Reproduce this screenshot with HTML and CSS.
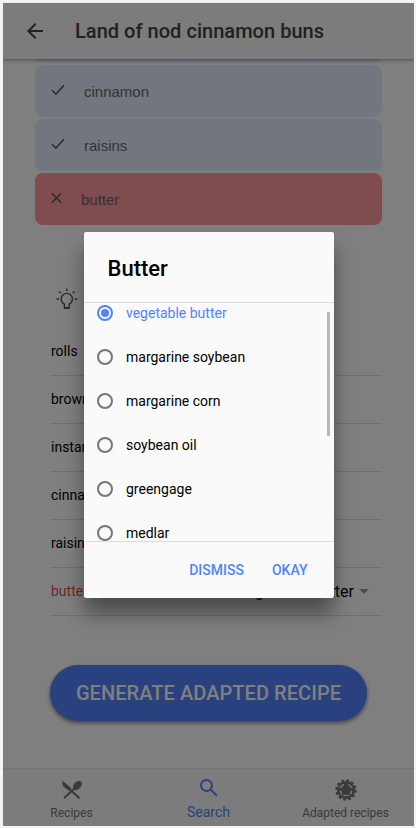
FILE: index.html
```html
<!DOCTYPE html>
<html lang="en">
<head>
<meta charset="utf-8">
<title>Land of nod cinnamon buns</title>
<link rel="stylesheet" href="styles.css">
</head>
<body>
<div class="screen">
  <header class="toolbar">
    <svg class="back" viewBox="0 0 16 16"><path d="M16 7H3.8l5.6-5.6L8 0 0 8l8 8 1.4-1.4L3.8 9H16z"/></svg>
    <h1>Land of nod cinnamon buns</h1>
  </header>
  <main class="content">
    <div class="ingredients">
      <div class="ingredient"></div>
      <div class="ingredient"><svg class="check" viewBox="0 0 14 12"><path d="M1 6.2l3.9 3.9L13 1.3"/></svg><span>cinnamon</span></div>
      <div class="ingredient"><svg class="check" viewBox="0 0 14 12"><path d="M1 6.2l3.9 3.9L13 1.3"/></svg><span>raisins</span></div>
      <div class="ingredient missing"><svg class="cross" viewBox="0 0 11 12"><path d="M.8 1.3l9.4 9.4M10.2 1.3L.8 10.7"/></svg><span>butter</span></div>
    </div>
    <div class="tip">
      <svg viewBox="0 0 22 22"><path d="M8.4 20.3v-4.1C6.3 15 5.2 13.100 5.200 11a5.600 5.600 0 0 1 11.200 0c0 2.100-1.100 4-3.200 5.200v4.100zM10.800 .5v2.600M.4 11h2.700M18.600 11h2.700M3.200 3.400l1.700 1.700M18.400 3.400l-1.700 1.700"/><path d="M8.400 19.700h4.800"/></svg>
    </div>
    <div class="replacements">
      <div class="row">rolls</div>
      <div class="row">brown sugar</div>
      <div class="row">instant</div>
      <div class="row">cinnamon</div>
      <div class="row">raisins</div>
      <div class="row changed"><span>butter</span><span class="select">vegetable butter<i class="caret"></i></span></div>
    </div>
    <button class="generate">GENERATE ADAPTED RECIPE</button>
  </main>
  <nav class="tabs">
    <div class="tab">
      <svg class="cutlery" viewBox="0 0 20 18"><path d="M1 .1L9.200 7.300 6.800 9.800 1.900 6.100Q-.8 3 1 .1z"/><path d="M12.400 9c-2-1.700-1.600-4.900.5-7 2-2 5-2.500 6.300-1.200 1.300 1.300.8 4.300-1.300 6.200-1.900 1.800-4.100 2.500-5.500 2z"/><path class="stroke" d="M2 17.300L14 6M7.500 8.300l10.100 9"/></svg>
      <span>Recipes</span>
    </div>
    <div class="tab active">
      <svg class="search" viewBox="0 0 18 18"><circle cx="6.500" cy="6.500" r="5.500"/><path d="M10.500 10.500l6.400 6.400"/></svg>
      <span>Search</span>
    </div>
    <div class="tab">
      <svg class="gear" viewBox="0 0 22 22">
        <circle class="teeth" cx="11" cy="11" r="9.600"/>
        <circle cx="11" cy="11" r="9"/>
        <path class="gaps" d="M5.300 8.300l3-2.500M13.700 5.800l3 2.500M5.400 12.200l1.200 2.600M16.600 12.200l-1.200 2.600M8.800 16.500h4.400"/>
      </svg>
      <span>Adapted recipes</span>
    </div>
  </nav>
  <div class="backdrop">
    <section class="dialog">
      <h2>Butter</h2>
      <div class="options">
        <label class="option selected"><i class="radio"></i>vegetable butter</label>
        <label class="option"><i class="radio"></i>margarine soybean</label>
        <label class="option"><i class="radio"></i>margarine corn</label>
        <label class="option"><i class="radio"></i>soybean oil</label>
        <label class="option"><i class="radio"></i>greengage</label>
        <label class="option"><i class="radio"></i>medlar</label>
        <i class="thumb"></i>
      </div>
      <footer><button>DISMISS</button><button>OKAY</button></footer>
    </section>
  </div>
</div>
</body>
</html>
```
FILE: styles.css
```css
* { box-sizing: border-box; }
body { margin: 0; padding: 3px 2px 2px 3px; height: 828px; overflow: hidden; background: #efefef; font-family: Roboto, sans-serif; box-shadow: inset 0 0 0 2px #f4f4f4; }
svg { display: block; flex: none; overflow: visible; }
button { border: 0; background: none; font-family: inherit; font-weight: 500; padding: 0; white-space: nowrap; }
.screen { position: relative; width: 411px; height: 823px; display: flex; flex-direction: column; background: #fff; overflow: hidden; }
.toolbar { height: 56px; flex: none; display: flex; align-items: center; padding-left: 24px; background: #f8f8f8; box-shadow: 0 1px 4px rgba(0,0,0,.42); z-index: 1; }
.back { width: 16px; height: 16px; fill: #424242; }
.toolbar h1 { margin: 0 0 0 32px; font-size: 20px; line-height: 24px; font-weight: 500; letter-spacing: .03px; color: #424242; white-space: nowrap; }
.content { flex: 1; min-height: 0; overflow: hidden; }
.ingredients { display: grid; gap: 2px; margin: -48px 32px 0; }
.ingredient { height: 52px; border-radius: 8px; background: #e5eeff; display: flex; align-items: center; padding: 1px 0 0 16px; font: 15px "Liberation Sans", sans-serif; color: #666; }
.ingredient svg { fill: none; stroke: #555; stroke-width: 1.500px; margin-bottom: 3px; }
.check { width: 14px; height: 12px; margin-right: 19px; }
.cross { width: 11px; height: 12px; margin-right: 19px; }
.missing { background: #ff98a1; }
.tip { height: 103px; padding: 63px 0 0 53px; }
.tip svg { width: 22px; height: 22px; fill: none; stroke: #555; stroke-width: 1.400px; }
.replacements { margin: 0 32px 0 48px; }
.row { height: 48px; padding-bottom: 1px; border-bottom: 1px solid #dedede; display: flex; align-items: center; justify-content: space-between; font-size: 14px; color: #000; }
.changed { color: #e94b48; }
.select { display: flex; align-items: center; font-size: 16px; color: #000; margin: 1px 13px 0 0; }
.caret { border: 5px solid transparent; border-top-color: #999; border-bottom: 0; margin-left: 5px; }
.generate { display: block; width: 317px; height: 56px; margin: 49px 0 0 47px; border-radius: 28px; background: #5283fd; color: #fff; font-size: 20px; letter-spacing: .06px; box-shadow: 0 2px 4px rgba(0,0,0,.5); }
.tabs { height: 58px; flex: none; display: grid; grid-template-columns: repeat(3, 1fr); border-top: 1px solid #e4e4e4; background: #f8f8f8; }
.tab { display: flex; flex-direction: column; align-items: center; font-size: 12px; line-height: 14px; color: #747474; }
.tab svg { fill: #747474; }
.tab span { margin-top: auto; margin-bottom: 6px; }
.tab.active { color: #5283fd; font-size: 14px; }
.tab.active span { margin-bottom: 7px; }
.tab .cutlery { width: 20px; height: 18px; margin-top: 12px; }
.cutlery .stroke { stroke: #747474; stroke-width: 2px; fill: none; }
.tab .search { width: 18px; height: 18px; margin-top: 10px; fill: none; stroke: #5283fd; stroke-width: 2px; }
.gear { width: 22px; height: 22px; margin-top: 10px; }
.gear .teeth { fill: none; stroke: #747474; stroke-width: 2.200px; stroke-dasharray: 2.826 2.200; }
.gear .gaps { fill: none; stroke: #e8e8e8; stroke-width: 1.700px; stroke-linecap: round; }
.backdrop { position: absolute; inset: 0; z-index: 2; background: rgba(0,0,0,.5); display: grid; place-items: center; }
.dialog { width: 250px; height: 366px; margin: 1px 0 0 1px; display: flex; flex-direction: column; border-radius: 2px; overflow: hidden; background: #fafafa; box-shadow: 0 16px 20px rgba(0,0,0,.4); }
.dialog h2 { margin: 0; height: 70px; flex: none; padding: 24px 24px 0 23.500px; font-size: 22px; line-height: 26px; font-weight: 500; color: #000; }
.options { position: relative; height: 240px; flex: none; overflow: hidden; border: solid #dcdcdc; border-width: 1px 0; }
.option { height: 44px; display: flex; align-items: center; padding-left: 13px; font-size: 14px; color: #000; }
.option:first-child { margin-top: -12px; }
.radio { width: 16px; height: 16px; margin-right: 13px; border: 2px solid #767676; border-radius: 50%; flex: none; display: grid; place-items: center; }
.selected { color: #5283fd; }
.selected .radio { border-color: #5283fd; }
.selected .radio::after { content: ""; width: 8px; height: 8px; border-radius: 50%; background: #5283fd; }
.thumb { position: absolute; top: 9px; right: 4px; width: 3px; height: 124px; background: #b9b9b9; }
.dialog footer { height: 56px; display: flex; align-items: center; justify-content: flex-end; gap: 28px; padding-right: 26.500px; }
.dialog footer button { font-size: 14px; color: #5283fd; }
```
